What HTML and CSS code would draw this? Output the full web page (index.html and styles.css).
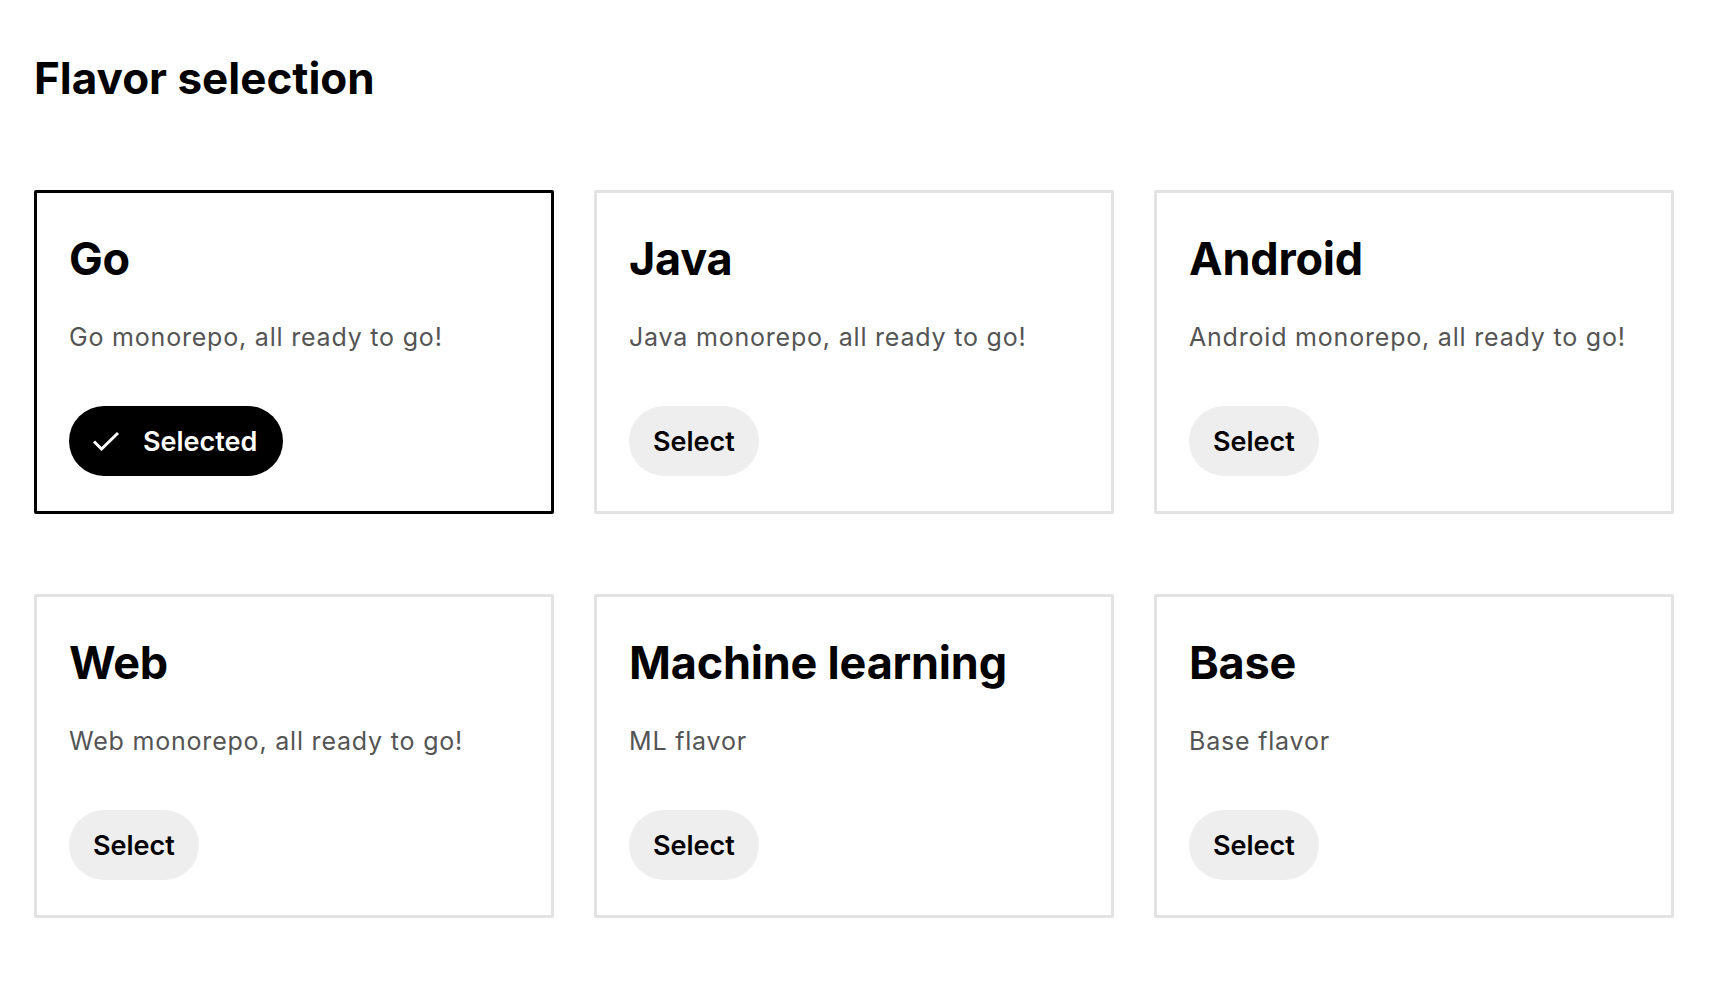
FILE: index.html
```html
<!DOCTYPE html>
<html lang="en">
<head>
<meta charset="utf-8">
<title>Flavor selection</title>
<link rel="stylesheet" href="styles.css">
</head>
<body>
<main class="page">
  <h1 class="page-title">Flavor selection</h1>
  <div class="grid">
    <div class="card card--selected">
      <h2 class="card-title">Go</h2>
      <p class="card-desc">Go monorepo, all ready to go!</p>
      <button class="btn btn--selected" type="button">
        <svg class="check" width="28" height="20" viewBox="0 0 28 20" aria-hidden="true"><path d="M2 10.5 L9.5 18 L26 2" fill="none" stroke="#fff" stroke-width="3"/></svg>
        <span>Selected</span>
      </button>
    </div>
    <div class="card">
      <h2 class="card-title">Java</h2>
      <p class="card-desc">Java monorepo, all ready to go!</p>
      <button class="btn" type="button">Select</button>
    </div>
    <div class="card">
      <h2 class="card-title">Android</h2>
      <p class="card-desc">Android monorepo, all ready to go!</p>
      <button class="btn" type="button">Select</button>
    </div>
    <div class="card">
      <h2 class="card-title">Web</h2>
      <p class="card-desc">Web monorepo, all ready to go!</p>
      <button class="btn" type="button">Select</button>
    </div>
    <div class="card">
      <h2 class="card-title">Machine learning</h2>
      <p class="card-desc">ML flavor</p>
      <button class="btn" type="button">Select</button>
    </div>
    <div class="card">
      <h2 class="card-title">Base</h2>
      <p class="card-desc">Base flavor</p>
      <button class="btn" type="button">Select</button>
    </div>
  </div>
</main>
</body>
</html>
```
FILE: styles.css
```css
html, body {
  margin: 0;
  padding: 0;
  background: #ffffff;
}

body {
  font-family: Inter, "Liberation Sans", Arial, sans-serif;
  color: #000000;
}

.page {
  padding: 52px 34px 40px 34px;
}

.page-title {
  margin: 0 0 86px 0;
  font-size: 44px;
  line-height: 52px;
  font-weight: 700;
  letter-spacing: 0;
}

.grid {
  display: grid;
  grid-template-columns: repeat(3, 520px);
  column-gap: 40px;
  row-gap: 80px;
}

.card {
  box-sizing: border-box;
  height: 324px;
  border: 3px solid #e2e2e2;
  border-radius: 2px;
  padding: 40px 32px 35px 32px;
  display: flex;
  flex-direction: column;
  align-items: flex-start;
}

.card--selected {
  border-color: #000000;
}

.card-title {
  margin: 0;
  font-size: 45px;
  line-height: 52px;
  font-weight: 700;
  letter-spacing: -0.2px;
}

.card-desc {
  margin: 36px 0 0 0;
  font-size: 25px;
  line-height: 32px;
  font-weight: 400;
  color: #545454;
  letter-spacing: 0.8px;
}

.btn {
  margin-top: 53px;
  height: 70px;
  border: none;
  border-radius: 35px;
  background: #eeeeee;
  color: #000000;
  font-family: Inter, "Liberation Sans", Arial, sans-serif;
  font-size: 27px;
  font-weight: 600;
  padding: 0 24px;
  display: inline-flex;
  align-items: center;
  gap: 23px;
  cursor: pointer;
}

.btn--selected {
  background: #000000;
  color: #ffffff;
  padding: 0 26px 0 23px;
}

.check {
  display: block;
}
```
